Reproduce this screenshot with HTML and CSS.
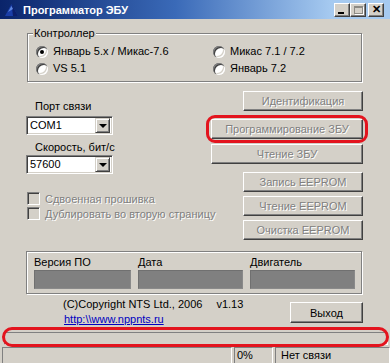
FILE: index.html
```html
<!DOCTYPE html>
<html lang="ru">
<head>
<meta charset="utf-8">
<link rel="stylesheet" href="styles.css">
</head>
<body>
<div class="win">
  <div class="titlebar">
    <svg class="appicon" width="15" height="14" viewBox="0 0 15 14"><path d="M1 13 L7.5 1 L14 13 Z" fill="#1a3ea8"/><path d="M7.5 1 L14 13 L9 13 Z" fill="#0c1f6a"/><path d="M4 9 L7.5 3 L9 6 Z" fill="#5d86e0"/></svg>
    <span class="title">Программатор ЭБУ</span>
    <div class="caps">
      <span class="cap cap-min"><i></i></span>
      <span class="cap cap-max"><i></i></span>
      <span class="cap cap-close">✕</span>
    </div>
  </div>
  <div class="client">
    <div class="group ctrl">
      <span class="legend">Контроллер</span>
      <div class="radios">
        <label class="radio"><span class="rb on"></span><span class="focus">Январь 5.x / Микас-7.6</span></label>
        <label class="radio"><span class="rb"></span><span>Микас 7.1 / 7.2</span></label>
        <label class="radio"><span class="rb"></span><span>VS 5.1</span></label>
        <label class="radio"><span class="rb"></span><span>Январь 7.2</span></label>
      </div>
    </div>
    <div class="mid">
      <div class="left">
        <div class="lbl l1">Порт связи</div>
        <div class="combo"><span class="val">COM1</span><span class="drop"><i></i></span></div>
        <div class="lbl l2">Скорость, бит/с</div>
        <div class="combo"><span class="val">57600</span><span class="drop"><i></i></span></div>
        <div class="chk c1"><span class="cb"></span><span class="dis">Сдвоенная прошивка</span></div>
        <div class="chk"><span class="cb"></span><span class="dis">Дублировать во вторую страницу</span></div>
      </div>
      <div class="right">
        <div class="btn narrow dis b1">Идентификация</div>
        <div class="btn wide dis b2">Программирование ЗБУ<span class="mark"></span></div>
        <div class="btn wide dis b3">Чтение ЗБУ</div>
        <div class="btn narrow dis b4">Запись EEPROM</div>
        <div class="btn narrow dis b5">Чтение EEPROM</div>
        <div class="btn narrow dis b5">Очистка EEPROM</div>
      </div>
    </div>
    <div class="group info">
      <div class="field f1"><span>Версия ПО</span><div class="box"></div></div>
      <div class="field f2"><span>Дата</span><div class="box"></div></div>
      <div class="field f2"><span>Двигатель</span><div class="box"></div></div>
    </div>
    <div class="footer">
      <div class="copy">
        <div>(C)Copyright NTS Ltd., 2006<span class="ver">v1.13</span></div>
        <a class="link" href="#">http:\\www.nppnts.ru</a>
      </div>
      <div class="btn exit">Выход</div>
    </div>
  </div>
  <div class="progress-wrap">
    <div class="progress"></div>
    <span class="mark mark-pill"></span>
  </div>
  <div class="status">
    <div class="panel p1"></div>
    <div class="panel p2">0%</div>
    <div class="panel p3">Нет связи</div>
  </div>
</div>
</body>
</html>
```
FILE: styles.css
```css
* { box-sizing: border-box; }
html, body { margin: 0; padding: 0; background: #d4d0c8; }
.win {
  width: 390px; height: 363px; background: #d4d0c8;
  font-family: "Liberation Sans", Arial, sans-serif; font-size: 11px; color: #000;
  position: relative; overflow: hidden;
  display: flex; flex-direction: column;
}
.titlebar {
  height: 19px; flex: none;
  background: linear-gradient(to right, #0a246a 0%, #3a6ab8 45%, #a6caf0 85%, #a6caf0 100%);
  display: flex; align-items: center; padding-left: 4px;
}
.appicon { flex: none; }
.title { color: #fff; font-weight: bold; font-size: 11px; margin-left: 4px; }
.caps { margin-left: auto; display: flex; margin-right: 6px; }
.cap {
  width: 16px; height: 14px; background: #d4d0c8;
  border: 1px solid; border-color: #fff #404040 #404040 #fff;
  box-shadow: inset -1px -1px 0 #808080;
  position: relative; display: flex; align-items: center; justify-content: center;
  font-size: 10px; font-weight: bold; line-height: 1;
}
.cap-close { margin-left: 2px; font-size: 11px; }
.cap-min i { position: absolute; left: 3px; bottom: 2px; width: 6px; height: 2px; background: #000; }
.cap-max i { position: absolute; left: 3px; top: 2px; width: 9px; height: 8px; border: 1px solid #8c8a84; border-top-width: 2px; box-shadow: 1px 1px 0 #fff; }

.client { padding-left: 26px; flex: none; }
.group {
  position: relative; border: 1px solid #808080;
  box-shadow: 1px 1px 0 #fff, inset 1px 1px 0 #fff;
}
.ctrl { margin-top: 14px; margin-left: 1px; width: 335px; height: 49px; padding: 9px 0 0 8px; }
.legend { position: absolute; left: 5px; top: -8px; background: #d4d0c8; padding: 0 1px; line-height: 14px; }
.radios { display: grid; grid-template-columns: 177px auto; grid-auto-rows: 17px; }
.radio { display: flex; align-items: center; }
.rb {
  width: 12px; height: 12px; border-radius: 50%; background: #fff; flex: none;
  box-shadow: inset 1px 1px 0 #808080, inset 2px 2px 0 #404040, inset -1px -1px 0 #fff, inset -2px -2px 0 #d4d0c8;
  margin-right: 3px; position: relative;
}
.rb.on::after { content: ""; position: absolute; left: 4px; top: 4px; width: 4px; height: 4px; border-radius: 50%; background: #000; }
.radio span:last-child { padding: 0 1px; border: 1px solid transparent; line-height: 13px; }
.radio .focus { border: 1px dotted #000; }

.mid { display: flex; height: 158px; }
.left { width: 184px; white-space: nowrap; }
.lbl { padding-left: 9px; line-height: 15px; }
.l1 { margin-top: 17px; }
.l2 { margin-top: 5px; }
.combo {
  width: 87px; height: 19px; margin-top: 2px; background: #fff;
  border: 1px solid; border-color: #808080 #fff #fff #808080;
  box-shadow: inset 1px 1px 0 #404040, inset -1px -1px 0 #d4d0c8;
  display: flex; align-items: center; padding: 2px;
}
.l2 + .combo { margin-top: 0; }
.combo .val { flex: 1; padding-left: 1px; line-height: 13px; }
.drop {
  width: 15px; height: 15px; background: #d4d0c8; flex: none;
  border: 1px solid; border-color: #d4d0c8 #404040 #404040 #d4d0c8;
  box-shadow: inset 1px 1px 0 #fff, inset -1px -1px 0 #808080;
  display: flex; align-items: center; justify-content: center;
}
.drop i { width: 0; height: 0; border-left: 4px solid transparent; border-right: 4px solid transparent; border-top: 4px solid #000; margin-top: 1px; }
.chk { display: flex; align-items: center; height: 15px; margin-left: 1px; }
.c1 { margin-top: 17px; }
.cb {
  width: 13px; height: 13px; flex: none; background: #d4d0c8;
  border: 1px solid; border-color: #808080 #fff #fff #808080;
  box-shadow: inset 1px 1px 0 #404040, inset -1px -1px 0 #d4d0c8;
  margin-right: 5px;
}
.dis { color: #808080; text-shadow: 1px 1px 0 #fff; }

.right { flex: 1; display: flex; flex-direction: column; align-items: flex-end; padding-right: 27px; }
.btn {
  height: 20px; background: #d4d0c8; position: relative;
  border: 1px solid; border-color: #fff #404040 #404040 #fff;
  box-shadow: inset -1px -1px 0 #808080;
  display: flex; align-items: center; justify-content: center; line-height: 14px;
}
.narrow { width: 120px; }
.wide { width: 152px; }
.b1 { margin-top: 9px; }
.b2 { margin-top: 8px; }
.b3 { margin-top: 5px; }
.b4 { margin-top: 8px; }
.b5 { margin-top: 4px; }
.mark {
  position: absolute; left: -6px; top: -5px; right: -6px; bottom: -5px;
  border: 3px solid #e3141e; border-radius: 9px; pointer-events: none;
}

.info { margin-top: 11px; width: 336px; height: 43px; display: flex; padding: 3px 0 0 7px; gap: 7px; }
.field { display: flex; flex-direction: column; }
.field span { line-height: 14px; }
.f1 { width: 97px; }
.f2 { width: 105px; }
.box { height: 19px; background: #808080; border: 1px solid; border-color: #707070 #8a8a8a #8a8a8a #707070; margin-top: 1px; }

.footer { display: flex; height: 33px; padding-right: 27px; }
.copy { padding-left: 37px; padding-top: 3px; line-height: 15px; }
.ver { margin-left: 14px; }
.link { color: #0000c0; text-decoration: underline; display: block; margin-left: 1px; }
.exit { margin-left: auto; margin-top: 8px; width: 73px; height: 21px; }

.progress-wrap { height: 20px; position: relative; padding: 5px 2px 0 4px; flex: none; }
.progress { height: 13px; border: 1px solid; border-color: #808080 #fff #fff #808080; }
.mark-pill { left: 2px; right: 1px; top: 0; bottom: 0; border-radius: 10px; }

.status { display: flex; height: 15px; padding-left: 2px; flex: none; }
.panel { border: 1px solid; border-color: #808080 #fff #fff #808080; height: 17px; padding: 1px 0 0 5px; line-height: 13px; }
.p1 { width: 230px; }
.p2 { width: 39px; margin-left: 2px; padding-left: 2px; }
.p3 { flex: 1; margin-left: 2px; }
```
